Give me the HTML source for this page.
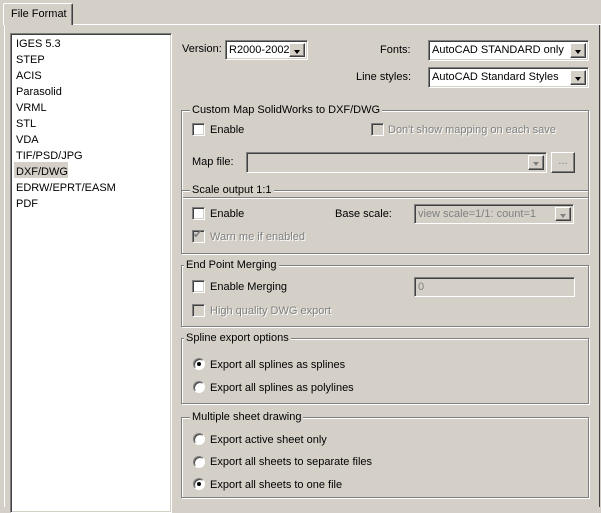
<!DOCTYPE html>
<html><head><style>
*{margin:0;padding:0;box-sizing:border-box}
body{width:601px;height:507px;background:#d4d0c8;font-family:"Liberation Sans",sans-serif;font-size:11px;color:#000;position:relative;overflow:hidden}
.a{position:absolute;white-space:nowrap;line-height:13px}
.dis{color:#808080;text-shadow:1px 1px 0 #fff}
.cb{position:absolute;width:13px;height:13px;background:#fff;border-top:1px solid #808080;border-left:1px solid #808080;border-right:1px solid #fff;border-bottom:1px solid #fff;box-shadow:inset 1px 1px 0 #404040,inset -1px -1px 0 #d4d0c8}
.cb.d{background:#d4d0c8}
.rb{position:absolute;width:12px;height:12px;border-radius:50%;background:#fff;border:1px solid;border-color:#808080 #fff #fff #808080;box-shadow:inset 1px 1px 0 #404040}
.rb.on::after{content:"";position:absolute;left:3px;top:3px;width:4px;height:4px;border-radius:50%;background:#000}
.grp{position:absolute;border:1px solid #808080;box-shadow:1px 1px 0 #fff,inset 1px 1px 0 #fff}
.gt{position:absolute;background:#d4d0c8;padding:0 2px;line-height:13px;top:-7px;left:8px}
.sunk{position:absolute;border:1px solid;border-color:#808080 #fff #fff #808080;box-shadow:inset 1px 1px 0 #404040,inset -1px -1px 0 #d4d0c8;background:#fff}
.btn{position:absolute;right:2px;top:2px;bottom:2px;width:16px;background:#d4d0c8;border:1px solid;border-color:#fff #404040 #404040 #fff;box-shadow:inset -1px -1px 0 #808080}
.btn::after{content:"";position:absolute;left:4px;top:6px;border-left:3.5px solid transparent;border-right:3.5px solid transparent;border-top:4px solid #000}
.btn.d::after{border-top-color:#808080}
.txt{position:absolute;left:3px;top:3px;line-height:13px;white-space:nowrap}
</style></head><body>
<!-- tab -->
<div style="position:absolute;left:72px;top:24px;width:529px;height:1px;background:#fff"></div>
<div style="position:absolute;left:4px;top:25px;width:1px;height:482px;background:#fff"></div>
<div style="position:absolute;left:3px;top:3px;width:70px;height:22px;border-left:1px solid #fff;border-top:1px solid #fff;border-right:1px solid #404040;box-shadow:inset -1px 0 0 #808080;border-radius:2px 2px 0 0;background:#d4d0c8"></div>
<div class="a" style="left:11px;top:8px">File Format</div>
<div style="position:absolute;left:599px;top:25px;width:1px;height:482px;background:#404040"></div>

<!-- list -->
<div class="sunk" style="left:10px;top:33px;width:162px;height:480px"></div>
<div style="position:absolute;left:14px;top:162px;width:54px;height:16px;background:#d4d0c8"></div>
<div class="a" style="left:16px;top:36px;line-height:16px">IGES 5.3<br>STEP<br>ACIS<br>Parasolid<br>VRML<br>STL<br>VDA<br>TIF/PSD/JPG<br>DXF/DWG<br>EDRW/EPRT/EASM<br>PDF</div>

<!-- top combos -->
<div class="a" style="left:182px;top:43px">Version:</div>
<div class="sunk" style="left:225px;top:40px;width:83px;height:20px"><div class="txt">R2000-2002</div><div class="btn"></div></div>
<div class="a" style="left:380px;top:44px">Fonts:</div>
<div class="sunk" style="left:428px;top:40px;width:161px;height:21px"><div class="txt">AutoCAD STANDARD only</div><div class="btn"></div></div>
<div class="a" style="left:356px;top:71px">Line styles:</div>
<div class="sunk" style="left:428px;top:67px;width:161px;height:21px"><div class="txt">AutoCAD Standard Styles</div><div class="btn"></div></div>

<!-- group 1 -->
<div class="grp" style="left:181px;top:110px;width:408px;height:88px"><div class="gt">Custom Map SolidWorks to DXF/DWG</div></div>
<div class="cb" style="left:192px;top:123px"></div><div class="a" style="left:210px;top:124px">Enable</div>
<div class="cb d" style="left:371px;top:123px"></div><div class="a dis" style="left:388px;top:124px">Don't show mapping on each save</div>
<div class="a" style="left:192px;top:156px">Map file:</div>
<div class="sunk" style="left:246px;top:152px;width:301px;height:21px;background:#d4d0c8"><div class="btn d"></div></div>
<div style="position:absolute;left:551px;top:152px;width:24px;height:21px;border:1px solid;border-color:#fff #404040 #404040 #fff;box-shadow:inset -1px -1px 0 #808080;color:#808080;text-align:center;line-height:16px">...</div>

<!-- group 2 -->
<div class="grp" style="left:181px;top:190px;width:408px;height:64px"><div class="gt">Scale output 1:1</div></div>
<div class="cb" style="left:192px;top:207px"></div><div class="a" style="left:210px;top:208px">Enable</div>
<div class="a" style="left:335px;top:208px">Base scale:</div>
<div class="sunk" style="left:414px;top:204px;width:160px;height:20px;background:#d4d0c8"><div class="txt dis" style="text-shadow:none">view scale=1/1: count=1</div><div class="btn d"></div></div>
<div class="cb d" style="left:192px;top:230px"></div><div class="a" style="left:193px;top:229px;color:#808080;font-size:11px">✔</div><div class="a dis" style="left:210px;top:231px">Warn me if enabled</div>

<!-- group 3 -->
<div class="grp" style="left:181px;top:265px;width:408px;height:62px"><div class="gt" style="left:2px">End Point Merging</div></div>
<div class="cb" style="left:192px;top:280px"></div><div class="a" style="left:210px;top:281px">Enable Merging</div>
<div class="sunk" style="left:414px;top:277px;width:161px;height:20px;background:#d4d0c8"><div class="txt dis" style="text-shadow:none">0</div></div>
<div class="cb d" style="left:192px;top:304px"></div><div class="a dis" style="left:210px;top:305px">High quality DWG export</div>

<!-- group 4 -->
<div class="grp" style="left:181px;top:338px;width:408px;height:66px"><div class="gt" style="left:2px">Spline export options</div></div>
<div class="rb on" style="left:193px;top:358px"></div><div class="a" style="left:210px;top:359px">Export all splines as splines</div>
<div class="rb" style="left:193px;top:381px"></div><div class="a" style="left:210px;top:382px">Export all splines as polylines</div>

<!-- group 5 -->
<div class="grp" style="left:181px;top:417px;width:408px;height:81px"><div class="gt">Multiple sheet drawing</div></div>
<div class="rb" style="left:193px;top:433px"></div><div class="a" style="left:210px;top:434px">Export active sheet only</div>
<div class="rb" style="left:193px;top:456px"></div><div class="a" style="left:210px;top:456px">Export all sheets to separate files</div>
<div class="rb on" style="left:193px;top:478px"></div><div class="a" style="left:210px;top:479px">Export all sheets to one file</div>
</body></html>
